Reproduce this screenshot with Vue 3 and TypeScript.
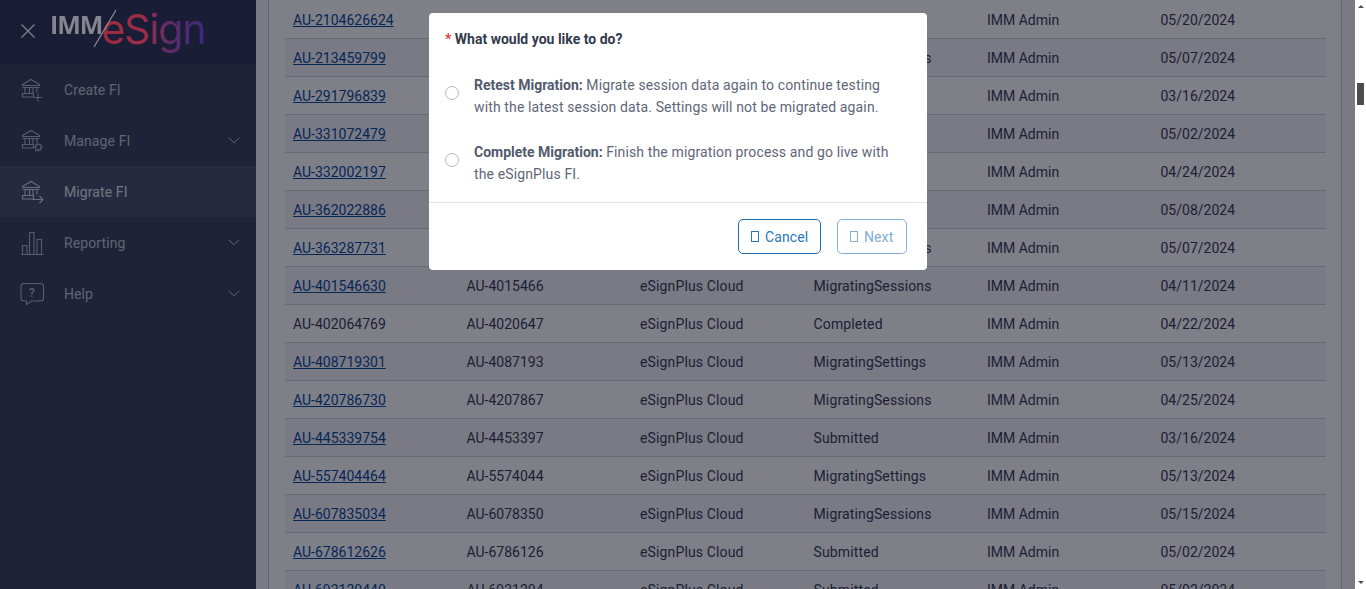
<script setup lang="ts">
interface Row {
  id: string;
  alias: string;
  product: string;
  status: string;
  owner: string;
  date: string;
  linked: boolean;
}

const raw: [string, string, string, string][] = [
  ["AU-2104626624", "AU-21046266", "Submitted", "05/20/2024"],
  ["AU-213459799", "AU-2134597", "MigratingSessions", "05/07/2024"],
  ["AU-291796839", "AU-2917968", "Submitted", "03/16/2024"],
  ["AU-331072479", "AU-3310724", "Submitted", "05/02/2024"],
  ["AU-332002197", "AU-3320021", "Submitted", "04/24/2024"],
  ["AU-362022886", "AU-3620228", "Submitted", "05/08/2024"],
  ["AU-363287731", "AU-3632877", "MigratingSessions", "05/07/2024"],
  ["AU-401546630", "AU-4015466", "MigratingSessions", "04/11/2024"],
  ["AU-402064769", "AU-4020647", "Completed", "04/22/2024"],
  ["AU-408719301", "AU-4087193", "MigratingSettings", "05/13/2024"],
  ["AU-420786730", "AU-4207867", "MigratingSessions", "04/25/2024"],
  ["AU-445339754", "AU-4453397", "Submitted", "03/16/2024"],
  ["AU-557404464", "AU-5574044", "MigratingSettings", "05/13/2024"],
  ["AU-607835034", "AU-6078350", "MigratingSessions", "05/15/2024"],
  ["AU-678612626", "AU-6786126", "Submitted", "05/02/2024"],
  ["AU-693120440", "AU-6931204", "Submitted", "05/02/2024"],
];

const rows: Row[] = raw.map((r) => ({
  id: r[0],
  alias: r[1],
  product: "eSignPlus Cloud",
  status: r[2],
  owner: "IMM Admin",
  date: r[3],
  linked: r[2] !== "Completed",
}));

const menu = [
  { label: "Create FI", icon: "create", arrow: false, active: false },
  { label: "Manage FI", icon: "manage", arrow: true, active: false },
  { label: "Migrate FI", icon: "migrate", arrow: false, active: true },
  { label: "Reporting", icon: "reporting", arrow: true, active: false },
  { label: "Help", icon: "help", arrow: true, active: false },
];
</script>

<template>
  <div class="page">
    <aside class="sidebar">
      <header class="brand">
        <svg class="close" width="16" height="16" viewBox="0 0 16 16">
          <path d="M1.5 1.5 14.5 14.5M14.5 1.5 1.5 14.5" stroke="currentColor" stroke-width="1.3" fill="none" />
        </svg>
        <div class="logo">
          <span class="logo-imm">IMM</span>
          <svg class="logo-slash" width="24" height="40" viewBox="0 0 24 40">
            <path d="M23 1 1 38" stroke="#8d8d96" stroke-width="1.2" fill="none" />
          </svg>
          <span class="logo-esign">eSign</span>
        </div>
      </header>
      <nav>
        <a v-for="item in menu" :key="item.label" class="nav-item" :class="{ active: item.active }">
          <svg class="nav-icon" width="26" height="28" viewBox="0 0 26 28" fill="none" stroke="currentColor" stroke-width="1.1">
            <template v-if="item.icon === 'reporting'">
              <path d="M1 25.500h22.500M2.500 25V16.500h4.500V25M9.500 25V3.500h4.500V25M17 25V10.500h4.500V25" />
            </template>
            <template v-else-if="item.icon === 'help'">
              <path d="M4 3.500h16.500a3 3 0 0 1 3 3v11.500a3 3 0 0 1-3 3H11.500L6.500 24.500v-3.500H4a3 3 0 0 1-3-3V6.500a3 3 0 0 1 3-3Z" />
              <text x="12" y="16.500" class="help-mark">?</text>
            </template>
            <template v-else>
              <path d="M2.500 8.500 11 3.500l8.500 5v1h-17ZM2.500 11.500h17M5 11.500v5.500M9.500 11.500v5.500M13 11.500v5.500M17 11.500v5M2.500 17.500h11v3.500h-11Z" />
              <path v-if="item.icon === 'create'" d="M18 17.500v8M14 21.500h8" />
              <g v-if="item.icon === 'manage'">
                <circle cx="18.300" cy="20.300" r="2.800" />
                <path d="M18.300 16v1.500M18.300 23.100v1.500M14 20.300h1.500M21.100 20.300h1.500M15.300 17.300l1 1M20.300 22.300l1 1M21.300 17.300l-1 1M16.300 23.300l-1 1" />
              </g>
              <path v-if="item.icon === 'migrate'" d="M12.500 21.500h10.500M19.500 18l3.500 3.500-3.500 3.500" />
            </template>
          </svg>
          <span class="nav-label">{{ item.label }}</span>
          <svg v-if="item.arrow" class="chevron" width="12" height="7" viewBox="0 0 12 7">
            <path d="M.7.7 6 5.800 11.300.7" stroke="currentColor" stroke-width="1" fill="none" />
          </svg>
        </a>
      </nav>
    </aside>

    <main class="content">
      <div class="panel">
        <table class="grid">
          <tbody>
            <tr v-for="row in rows" :key="row.id">
              <td>
                <a v-if="row.linked" class="link">{{ row.id }}</a>
                <template v-else>{{ row.id }}</template>
              </td>
              <td>{{ row.alias }}</td>
              <td class="wide">{{ row.product }}</td>
              <td class="wide">{{ row.status }}</td>
              <td>{{ row.owner }}</td>
              <td>{{ row.date }}</td>
            </tr>
          </tbody>
        </table>
      </div>
    </main>

    <div class="scrollbar">
      <span class="arrow up"></span>
      <span class="thumb"></span>
      <span class="arrow down"></span>
    </div>

    <div class="overlay">
      <section class="modal">
        <div class="modal-body">
          <p class="question"><span class="required">*</span> What would you like to do?</p>
          <label class="option">
            <span class="radio"></span>
            <span class="option-text"><b>Retest Migration:</b> Migrate session data again to continue testing with the latest session data. Settings will not be migrated again.</span>
          </label>
          <label class="option">
            <span class="radio"></span>
            <span class="option-text"><b>Complete Migration:</b> Finish the migration process and go live with the eSignPlus FI.</span>
          </label>
        </div>
        <footer class="modal-footer">
          <button class="btn cancel"><span class="tofu"></span>Cancel</button>
          <button class="btn next" disabled><span class="tofu"></span>Next</button>
        </footer>
      </section>
    </div>
  </div>
</template>

<style scoped>
.page {
  display: flex;
  height: 589px;
  overflow: hidden;
  font-family: Roboto, "Liberation Sans", sans-serif;
  font-size: 14px;
  color: #3c4257;
  background: #fff;
}

.sidebar {
  width: 256px;
  flex: none;
  background: #3d4660;
  color: #c0c6d2;
}

.brand {
  height: 64px;
  display: flex;
  align-items: flex-start;
  background: #323c5a;
}

.close {
  margin: 23px 0 0 20px;
  color: #fff;
}

/* logo sits above the backdrop, its colours are already the dimmed ones */
.logo {
  position: relative;
  z-index: 2;
  display: flex;
  align-items: flex-start;
  margin: 0 0 0 14px;
}

.logo-imm {
  font-family: "Open Sans", sans-serif;
  font-weight: 700;
  font-size: 25px;
  line-height: 34px;
  letter-spacing: -1px;
  color: #85858f;
  margin-top: 7px;
}

.logo-slash {
  position: absolute;
  left: 43px;
  top: 9px;
}

.logo-esign {
  font-family: Inter, sans-serif;
  font-size: 41px;
  line-height: 48px;
  letter-spacing: -1.1px;
  margin: 5px 0 0 -1px;
  background: linear-gradient(90deg, #9e2b3c 0%, #9c2d48 40%, #622c68 65%, #382a80 100%);
  -webkit-background-clip: text;
  background-clip: text;
  color: transparent;
}

.nav-item {
  height: 51px;
  display: flex;
  align-items: center;
  padding-left: 20px;
  padding-right: 16px;
}

.nav-item.active {
  background: #4a5470;
  color: #e6e8ee;
}

.nav-icon {
  flex: none;
  margin-right: 18px;
  opacity: 0.9;
}

.help-mark {
  font-family: Roboto, sans-serif;
  font-size: 12px;
  font-weight: 500;
  text-anchor: middle;
  fill: currentColor;
  stroke: none;
}

.nav-label {
  flex: 1;
  font-size: 14px;
  letter-spacing: 0.1px;
}

.chevron {
  flex: none;
}

.content {
  flex: 1;
  min-width: 0;
  padding-left: 12px;
  padding-right: 13px;
  background: #f4f5f7;
}

.panel {
  height: 100%;
  padding: 0 16px;
  background: #fff;
  border-left: 1px solid #c9cbd6;
  border-right: 1px solid #c9cbd6;
}

.grid {
  width: 1041px;
  border-collapse: collapse;
  table-layout: fixed;
}

.grid td {
  height: 38px;
  padding: 2px 8px 0;
  box-sizing: border-box;
  border-bottom: 1px solid #d0d2dc;
  color: #3c4257;
  white-space: nowrap;
}

.grid td.wide {
  letter-spacing: 0.14px;
}

.grid tr:nth-child(even) td {
  background: #f3f4f6;
}

.link {
  color: #0a4f9e;
  text-decoration: underline;
}

.scrollbar {
  width: 11px;
  flex: none;
  position: relative;
  background: #fff;
}

.arrow {
  position: absolute;
  left: 3px;
  width: 0;
  height: 0;
  border-left: 3px solid transparent;
  border-right: 3px solid transparent;
}

.arrow.up {
  top: 5px;
  border-bottom: 3px solid #505050;
}

.arrow.down {
  bottom: 5px;
  border-top: 3px solid #505050;
}

.thumb {
  position: absolute;
  top: 83px;
  left: 2px;
  width: 7px;
  height: 22px;
  background: #4d4d4d;
}

.overlay {
  position: fixed;
  z-index: 1;
  top: 0;
  left: 0;
  right: 11px;
  bottom: 0;
  background: rgba(0, 0, 18, 0.5);
}

.modal {
  position: absolute;
  left: 429px;
  top: 13px;
  width: 498px;
  height: 257px;
  background: #fff;
  border-radius: 4px;
  box-sizing: border-box;
  display: flex;
  flex-direction: column;
}

.modal-body {
  flex: 1;
  min-height: 0;
  padding: 18px 16px 0;
  border-bottom: 1px solid #e1e3ea;
}

.question {
  margin: 0 0 27px;
  font-size: 14px;
  line-height: 16px;
  font-weight: 700;
  color: #333a4d;
}

.required {
  color: #e8413e;
}

.option {
  display: flex;
  align-items: center;
  margin-bottom: 23px;
}

.option:last-child {
  margin-bottom: 0;
}

.radio {
  flex: none;
  width: 12px;
  height: 12px;
  border: 1px solid #b5b7bb;
  border-radius: 50%;
  margin-right: 15px;
  margin-bottom: 6px;
  background: #fff;
}

.option-text {
  max-width: 425px;
  color: #5f6678;
  line-height: 22px;
  font-size: 14px;
  letter-spacing: 0.13px;
}

.option-text b {
  font-weight: 700;
  color: #525a6c;
  letter-spacing: 0;
}

.modal-footer {
  height: 67px;
  flex: none;
  display: flex;
  justify-content: flex-end;
  align-items: center;
  gap: 16px;
  padding-right: 20px;
}

.btn {
  height: 35px;
  box-sizing: border-box;
  display: flex;
  align-items: center;
  gap: 6px;
  padding: 0 12px;
  background: #fff;
  border-radius: 5px;
  font-family: inherit;
  font-size: 14px;
  letter-spacing: 0.1px;
}

.cancel {
  width: 83px;
  border: 1px solid #1d6fb0;
  color: #2a77b5;
}

.next {
  width: 70px;
  border: 1px solid #7fb0d8;
  color: #82afd3;
}

.tofu {
  width: 6px;
  height: 9px;
  border: 1px solid currentColor;
  flex: none;
}
</style>

<style>
html,
body {
  margin: 0;
  overflow: hidden;
}
</style>
